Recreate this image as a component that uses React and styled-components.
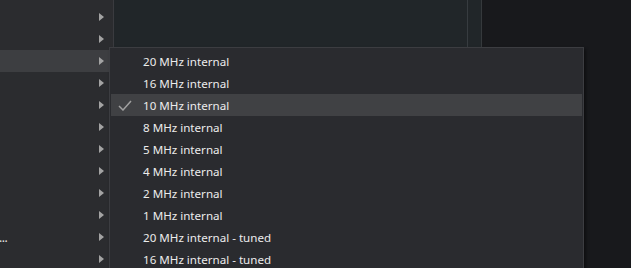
import React from "react";
import styled, { createGlobalStyle } from "styled-components";

const Global = createGlobalStyle`
  html, body { margin: 0; padding: 0; background: #18191c; }
  body { font-family: "Segoe UI", "Noto Sans", "Open Sans", sans-serif; }
  #root { width: 631px; height: 268px; overflow: hidden; }
`;

const Screen = styled.div`
  position: relative;
  display: flex;
  width: 631px;
  height: 268px;
  overflow: hidden;
  background: #18191c;
`;

const SideMenu = styled.div`
  width: 113px;
  flex: none;
  background: #2b2c2f;
  border-right: 1px solid #3a3b3f;
  padding-top: 6px;
  box-sizing: content-box;
  display: flex;
  flex-direction: column;
`;

const SideRow = styled.div`
  height: 22px;
  flex: none;
  display: flex;
  align-items: center;
  justify-content: space-between;
  padding-right: 9px;
  background: ${(p) => (p.$active ? "#3d3e41" : "transparent")};
  color: #e4e4e4;
  font-size: 12px;
`;

const Trunc = styled.span`
  margin-left: -1px;
  letter-spacing: -0.5px;
`;

const Arrow = styled.span`
  width: 0;
  height: 0;
  margin-left: auto;
  border-top: 4px solid transparent;
  border-bottom: 4px solid transparent;
  border-left: 5px solid #a3a3a3;
`;

const Panel = styled.div`
  width: 353px;
  flex: none;
  background: #212629;
  border-right: 1px solid #373c40;
`;

const Strip = styled.div`
  width: 13px;
  flex: none;
  background: #212629;
  border-right: 1px solid #35393c;
`;

const Backdrop = styled.div`
  flex: 1;
  background: #18191c;
`;

const SubMenu = styled.div`
  position: absolute;
  left: 109px;
  top: 47px;
  width: 471px;
  height: 260px;
  background: #2a2b2f;
  border: 1px solid #3c3d41;
  padding: 2px 1px;
  box-shadow: 2px 2px 3px rgba(0, 0, 0, 0.45);
  display: flex;
  flex-direction: column;
`;

const Item = styled.div`
  height: 22px;
  flex: none;
  display: flex;
  align-items: center;
  background: ${(p) => (p.$selected ? "#404144" : "transparent")};
  color: #ececec;
  font-size: 11.6px;
  white-space: nowrap;
`;

const CheckSlot = styled.span`
  width: 32px;
  flex: none;
  display: flex;
  align-items: center;
  padding-left: 7px;
  box-sizing: border-box;
`;

const Label = styled.span`
  line-height: 22px;
  padding-top: 2px;
`;

const Check = () => (
  <svg width="14" height="11" viewBox="0 0 14 11">
    <polyline points="1,6 5,10 13,1" fill="none" stroke="#a0a0a0" strokeWidth="1.5" />
  </svg>
);

const items = [
  "20 MHz internal",
  "16 MHz internal",
  "10 MHz internal",
  "8 MHz internal",
  "5 MHz internal",
  "4 MHz internal",
  "2 MHz internal",
  "1 MHz internal",
  "20 MHz internal - tuned",
  "16 MHz internal - tuned",
];

export default function App() {
  const sideRows = Array.from({ length: 12 });
  return (
    <>
      <Global />
      <Screen>
        <SideMenu>
          {sideRows.map((_, i) => (
            <SideRow key={i} $active={i === 2}>
              {i === 10 ? <Trunc>...</Trunc> : null}
              <Arrow />
            </SideRow>
          ))}
        </SideMenu>
        <Panel />
        <Strip />
        <Backdrop />
        <SubMenu>
          {items.map((t, i) => (
            <Item key={t} $selected={i === 2}>
              <CheckSlot>{i === 2 ? <Check /> : null}</CheckSlot>
              <Label>{t}</Label>
            </Item>
          ))}
        </SubMenu>
      </Screen>
    </>
  );
}
